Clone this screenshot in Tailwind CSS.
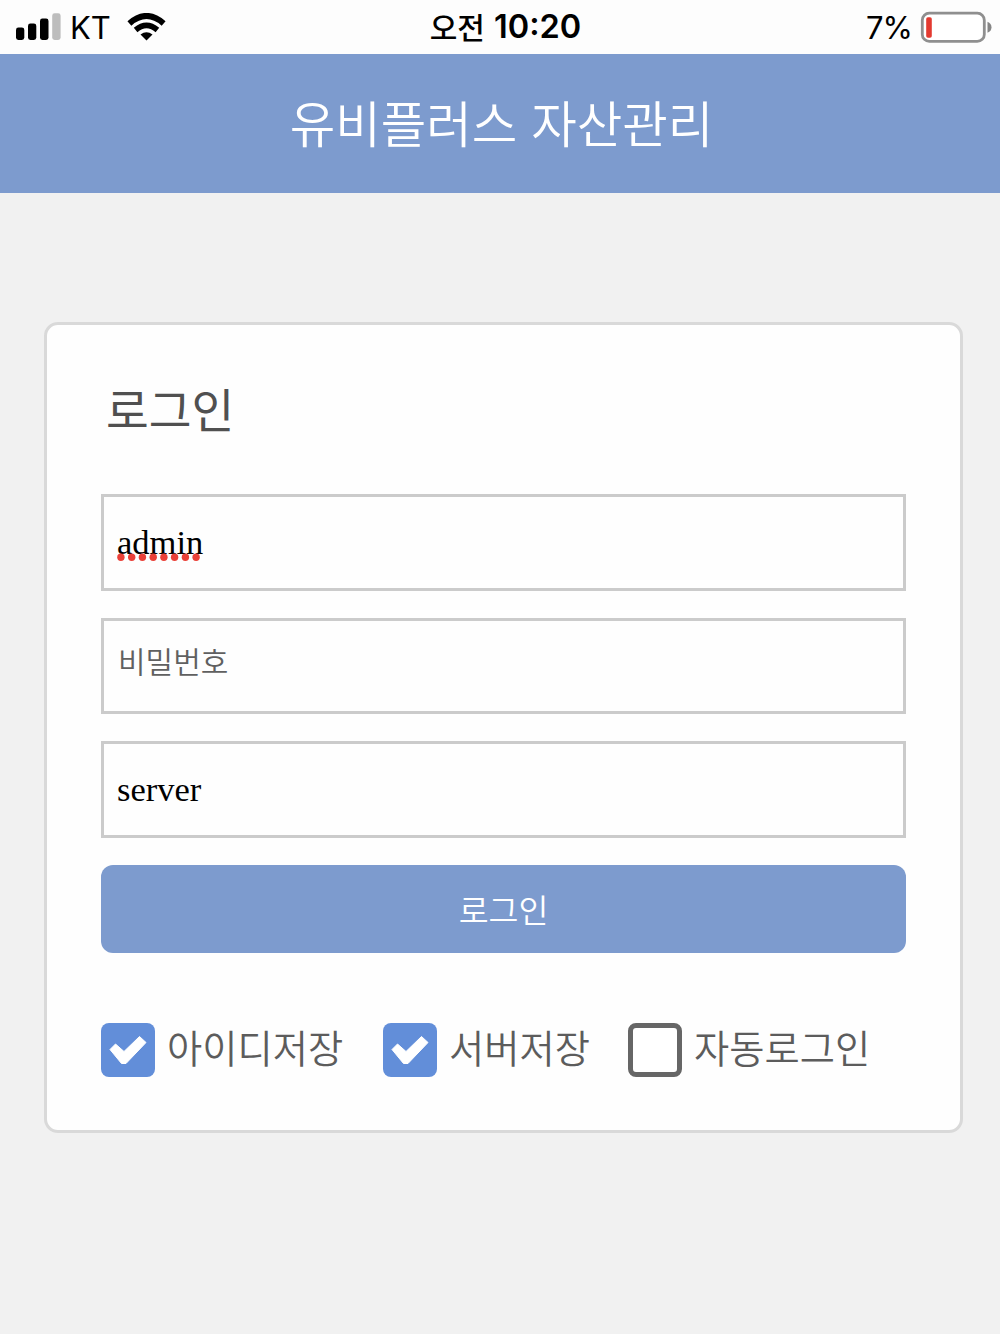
<!DOCTYPE html>
<html lang="ko">
<head>
  <meta charset="UTF-8" />
  <meta name="viewport" content="width=device-width,initial-scale=1.0" />
  <title>유비플러스 자산관리</title>
  <script src="https://cdn.jsdelivr.net/npm/@tailwindcss/browser@4"></script>
</head>
<body class="h-[1334px] bg-[#f1f1f1] overflow-hidden font-['Noto_Sans_CJK_KR',sans-serif] font-[350] text-[#5c5c5c]">

  <!-- STATUS BAR -->
  <div class="h-[54px] bg-[#fdfdfd] grid grid-cols-3 items-center text-black">
    <div class="flex items-center pl-4">
      <svg class="w-[45px] h-[28px]" viewBox="0 0 45 28">
        <rect x="0" y="14.5" width="8.3" height="12.5" rx="2.4" />
        <rect x="12" y="10.5" width="8.3" height="16.5" rx="2.4" />
        <rect x="24" y="5.5" width="8.5" height="21.5" rx="2.4" />
        <rect x="36.2" y="0.3" width="8.4" height="26.7" rx="2.4" fill="#bdbdbd" />
      </svg>
      <span class="ml-[9px] w-[42px] font-['Inter',sans-serif] font-normal text-[31px] leading-none">KT</span>
      <svg class="ml-[15px] w-[40px] h-[28px]" viewBox="0 0 40 28" fill="none" stroke="#000">
        <path d="M2.4 10.4 Q19.5 -4.4 36.6 10.4" stroke-width="6" />
        <path d="M8.6 17 Q19.5 7.8 30.4 17" stroke-width="5.6" />
        <path d="M13.5 21.6 Q19.5 17 25.5 21.6 L19.5 27.4 Z" fill="#000" stroke="none" />
      </svg>
    </div>
    <div class="flex items-center justify-center gap-[9px] pl-[11px] whitespace-nowrap">
      <span class="-mt-[3px] font-medium text-[30px] leading-none">오전</span>
      <span class="font-['Inter',sans-serif] font-semibold text-[32.5px] leading-none">10:20</span>
    </div>
    <div class="flex items-center justify-end pr-[8px]">
      <span class="font-['Inter',sans-serif] font-normal text-[31px] leading-none tracking-[-1px] mr-2">7%</span>
      <svg class="w-[72px] h-[32px]" viewBox="0 0 72 32">
        <rect x="2.3" y="2.2" width="62" height="28.2" rx="7" fill="#fff" stroke="#8f8f8f" stroke-width="2.8" />
        <rect x="6.2" y="6.3" width="5.6" height="20.5" rx="1.8" fill="#e33a30" />
        <path d="M67.5 10.8 Q71.5 12.300 71.5 16.300 Q71.5 20.300 67.5 21.800 Z" fill="#858585" />
      </svg>
    </div>
  </div>

  <!-- TITLE BAR -->
  <header class="h-[139px] bg-[#7d9bce] flex items-center justify-center">
    <h1 class="pl-[3px] pb-[3px] text-[49.5px] leading-none text-white whitespace-nowrap">유비플러스 자산관리</h1>
  </header>

  <!-- LOGIN CARD -->
  <main class="mt-[129px] ml-[44px] w-[919px] h-[811px] bg-[#fefefe] border-3 border-[#d9d9d9] rounded-[14px] px-[54px] pt-[55px]">
    <h2 class="h-[56px] pl-[5px] flex items-center text-[46.5px] leading-none font-normal text-[#505050]">로그인</h2>

    <div class="mt-[58px] flex flex-col gap-[27px]">
      <div class="h-[96.5px] border-3 border-[#cbcbcb] px-[13px] flex items-center">
        <span class="relative font-['Liberation_Serif',serif] font-normal text-[34.5px] leading-none text-black">admin
          <!-- spelling marks -->
          <svg class="absolute left-0 top-[28px] w-[88px] h-[9px]" viewBox="0 0 88 9" fill="#ea4038">
            <circle cx="3.9" cy="4.3" r="3.7" />
            <circle cx="14.7" cy="4.3" r="3.7" />
            <circle cx="25.4" cy="4.3" r="3.7" />
            <circle cx="36.2" cy="4.3" r="3.7" />
            <circle cx="46.9" cy="4.3" r="3.7" />
            <circle cx="57.6" cy="4.3" r="3.7" />
            <circle cx="68.4" cy="4.3" r="3.7" />
            <circle cx="79.1" cy="4.3" r="3.7" />
          </svg>
        </span>
      </div>
      <div class="h-[96.5px] border-3 border-[#cbcbcb] px-[14px] pb-3 flex items-center">
        <span class="text-[30px] leading-none text-[#606060]">비밀번호</span>
      </div>
      <div class="h-[96.5px] border-3 border-[#cbcbcb] px-[13px] flex items-center">
        <span class="font-['Liberation_Serif',serif] font-normal text-[34.5px] leading-none text-black">server</span>
      </div>
      <button class="h-[88px] pt-[2px] rounded-[12px] bg-[#7d9bce] text-white text-[32.5px] leading-none">로그인</button>
    </div>

    <div class="mt-[70px] flex items-center text-[38.3px] leading-none whitespace-nowrap">
      <label class="w-[282px] flex items-center gap-[12px]">
        <svg class="w-[54px] h-[54px] shrink-0" viewBox="0 0 54 54">
          <rect width="54" height="54" rx="8" fill="#628ed9" />
          <path d="M9 26.5 L14.5 21 L23 28.500 L38.500 13.500 L45 19.500 L25 40.500 L20.500 40.500 Z" fill="#fff" stroke="#fff" stroke-linejoin="round" />
        </svg>
        <span class="-mt-[5px]">아이디저장</span>
      </label>
      <label class="w-[245px] flex items-center gap-[12px]">
        <svg class="w-[54px] h-[54px] shrink-0" viewBox="0 0 54 54">
          <rect width="54" height="54" rx="8" fill="#628ed9" />
          <path d="M9 26.5 L14.5 21 L23 28.500 L38.500 13.500 L45 19.500 L25 40.500 L20.500 40.500 Z" fill="#fff" stroke="#fff" stroke-linejoin="round" />
        </svg>
        <span class="-mt-[5px]">서버저장</span>
      </label>
      <label class="flex items-center gap-[12px]">
        <span class="w-[54px] h-[54px] shrink-0 border-5 border-[#666] rounded-[8px] bg-white"></span>
        <span class="-mt-[5px]">자동로그인</span>
      </label>
    </div>
  </main>

</body>
</html>
